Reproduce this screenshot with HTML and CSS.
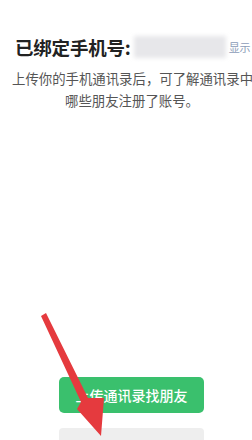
FILE: index.html
```
<!DOCTYPE html>
<html>

<head>
    <meta charset="utf-8">
    <title>通讯录</title>
    <link rel="stylesheet" href="styles.css">
</head>

<body>
    <div class="page">
        <div class="bound-row">
            <span class="bound-title">已绑定手机号:</span>
            <span class="phone-mask"></span>
            <span class="show-link">显示</span>
        </div>

        <p class="intro">上传你的手机通讯录后，可了解通讯录中<br>哪些朋友注册了账号。</p>

        <div class="actions">
            <button class="upload-btn">上传通讯录找朋友</button>
            <div class="secondary-bar"></div>
        </div>
    </div>

    <!-- annotation arrow -->
    <svg class="arrow" width="252" height="440" viewBox="0 0 252 440">
        <polygon points="41,316 46,313 88,398 104,398 101,436 77,409 81,402" fill="#e53a3e" />
    </svg>
</body>

</html>
```

FILE: styles.css
```
body {
    margin: 0;
    background: #fff;
    font-family: "Noto Sans CJK SC", "Noto Sans", sans-serif;
    overflow: hidden;
}

.page {
    width: 252px;
    height: 440px;
    display: flex;
    flex-direction: column;
}

.bound-row {
    display: flex;
    align-items: center;
    padding: 34px 0 0 15px;
    height: 26px;
    white-space: nowrap;
}

.bound-title {
    font-size: 18.5px;
    font-weight: 700;
    color: #222;
    letter-spacing: -0.2px;
}

.phone-mask {
    width: 92px;
    height: 22px;
    margin-left: 3px;
    background: #e7e7ea;
    filter: blur(2px);
}

.show-link {
    font-size: 11px;
    color: #8c9cb8;
    margin-left: 3px;
}

.intro {
    margin: 8px 0 0 12px;
    font-size: 13.4px;
    line-height: 21.5px;
    color: #555;
    text-align: center;
    white-space: nowrap;
}

.actions {
    margin-top: auto;
    padding-left: 59px;
    width: 145px;
}

.upload-btn {
    display: block;
    width: 145px;
    height: 36px;
    border: none;
    border-radius: 5px;
    background: #3ac06d;
    color: #fff;
    font-family: inherit;
    font-size: 14px;
    font-weight: 500;
    padding: 0;
}

.secondary-bar {
    margin-top: 15px;
    height: 12px;
    background: #eeeeee;
    border-radius: 4px 4px 0 0;
}

/* arrow sits over the content */
.arrow {
    position: absolute;
    left: 0;
    top: 0;
}
```
